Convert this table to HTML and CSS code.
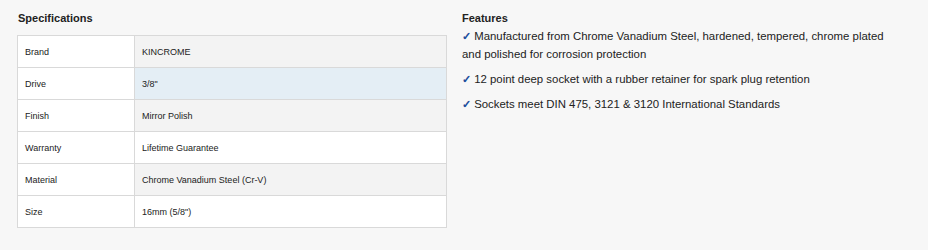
FILE: index.html
```html
<!DOCTYPE html>
<html lang="en">
<head>
    <meta charset="UTF-8">
    <title>Kincrome 16mm Spark Plug Socket</title>
    <link rel="stylesheet" href="styles.css">
</head>
<body>

<div class="details">
    <div class="specs">
        <h3>Specifications</h3>
        <table class="spec-table">
            <tr><td class="label">Brand</td><td>KINCROME</td></tr>
            <tr class="active"><td class="label">Drive</td><td>3/8"</td></tr>
            <tr><td class="label">Finish</td><td>Mirror Polish</td></tr>
            <tr><td class="label">Warranty</td><td>Lifetime Guarantee</td></tr>
            <tr><td class="label">Material</td><td>Chrome Vanadium Steel (Cr-V)</td></tr>
            <tr><td class="label">Size</td><td>16mm (5/8")</td></tr>
        </table>
    </div>

    <div class="features">
        <h4>Features</h4>
        <ul>
            <li><span class="tick">&#10003;</span> Manufactured from Chrome Vanadium Steel, hardened, tempered, chrome plated and polished for corrosion protection</li>
            <li><span class="tick">&#10003;</span> 12 point deep socket with a rubber retainer for spark plug retention</li>
            <li><span class="tick">&#10003;</span> Sockets meet DIN 475, 3121 &amp; 3120 International Standards</li>
        </ul>
    </div>
</div>

</body>
</html>
```

FILE: styles.css
```css
body {
    font-family: 'Liberation Sans', Arial, sans-serif;
    background-color: #f7f7f7;
    color: #222;
    margin: 0;
}
.details {
    display: flex;
    padding: 11px 17px 0 17px;
    gap: 15px;
}
.specs {
    width: 430px;
}
.specs h3 {
    font-size: 11px;
    font-weight: bold;
    margin: 0 0 10px 1px;
    line-height: 14px;
}
.spec-table {
    width: 100%;
    border-collapse: collapse;
    font-size: 9px;
    background-color: #fff;
}
.spec-table td {
    border: 1px solid #d9d9d9;
    height: 31px;
    padding: 0 7px;
}
.spec-table td.label {
    width: 102px;
}
/* value column alternates grey / white, label column stays white */
.spec-table tr:nth-child(odd) td {
    background-color: #f3f3f3;
}
.spec-table tr.active td {
    background-color: #e4eef5;
}
.spec-table tr td.label {
    background-color: #fff;
}
.features {
    width: 428px;
}
.features h4 {
    font-size: 11px;
    font-weight: bold;
    margin: 0;
    line-height: 14px;
}
.features ul {
    list-style: none;
    margin: 2px 0 0 0;
    padding: 0;
}
.features li {
    font-size: 11.4px;
    line-height: 18px;
    margin-bottom: 7px;
}
.tick {
    color: #1d4f9c;
    font-weight: bold;
}
```
